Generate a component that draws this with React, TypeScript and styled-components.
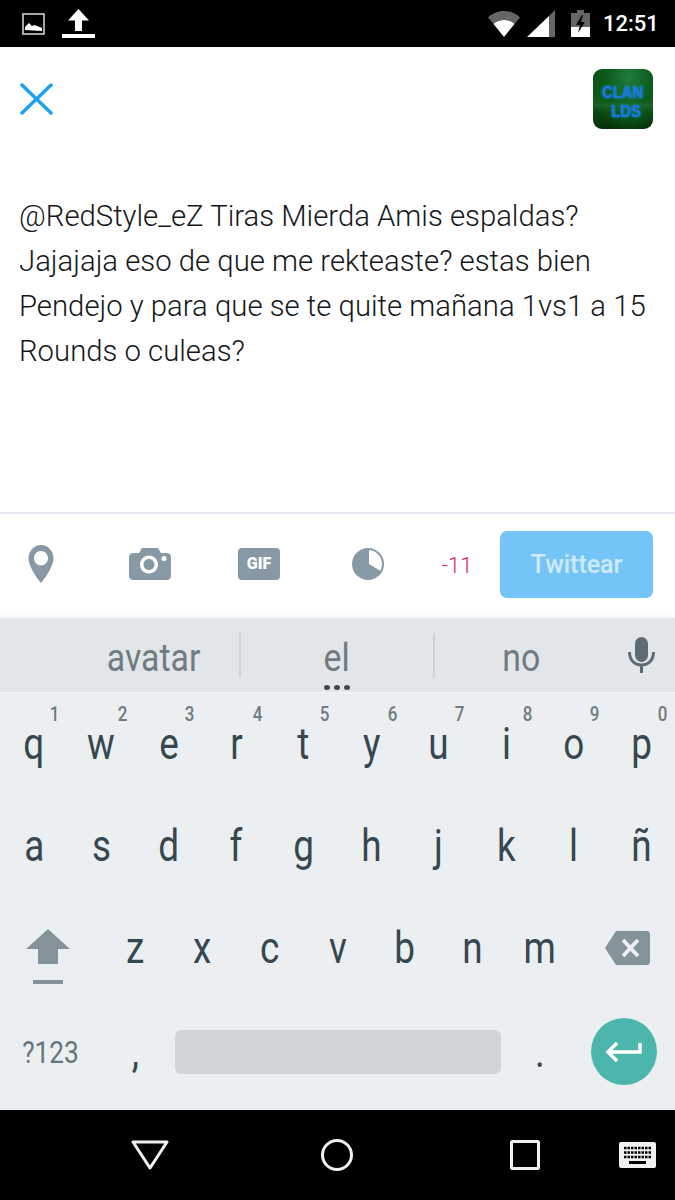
import React, { FC } from 'react'
import styled, { createGlobalStyle } from 'styled-components'

const GlobalStyle = createGlobalStyle`
  html, body {
    margin: 0;
    padding: 0;
    background: #fff;
  }
  body {
    font-family: Roboto, 'Liberation Sans', sans-serif;
  }
`

const Screen = styled.div`
  width: 675px;
  height: 1200px;
  display: flex;
  flex-direction: column;
  overflow: hidden;
  background: #fff;
`

const StatusBar = styled.div`
  height: 47px;
  flex: none;
  background: #000;
  display: flex;
  align-items: center;
  padding: 0 17px 0 22px;
  box-sizing: border-box;
`

const StatusGroup = styled.div<{ $push?: boolean }>`
  display: flex;
  align-items: center;
  margin-left: ${(p) => (p.$push ? 'auto' : '0')};
`

const Clock = styled.span`
  color: #fff;
  font-size: 22px;
  font-weight: 500;
  width: 55px;
  margin-left: 13px;
  white-space: nowrap;
`

const Composer = styled.div`
  flex: none;
  height: 467px;
  box-sizing: border-box;
  padding: 22px 22px 0 20px;
  border-bottom: 2px solid #e4e7ee;
`

const ComposerTop = styled.div`
  display: flex;
  justify-content: space-between;
  align-items: flex-start;
`

const CloseButton = styled.div`
  margin-top: 14px;
  height: 32px;
`

const Avatar = styled.div`
  width: 60px;
  height: 60px;
  box-sizing: border-box;
  padding-top: 5px;
  border-radius: 9px;
  background:
    linear-gradient(180deg, transparent 52%, rgba(60, 140, 70, 0.25) 60%, transparent 72%),
    radial-gradient(ellipse at 60% 15%, #1f7d3a 0%, #0d5a1d 45%, transparent 75%),
    linear-gradient(180deg, #0a4a10 0%, #0f5a1c 50%, #06300a 100%);
  display: flex;
  flex-direction: column;
  align-items: center;
  justify-content: center;
  color: #1a78e0;
  font-family: 'Liberation Sans', sans-serif;
  font-weight: 700;
  font-size: 17px;
  line-height: 19px;
  text-shadow: 0 0 3px #1590ee;
`

const AvatarLine = styled.span<{ $nudge?: boolean }>`
  display: inline-block;
  transform: scaleX(0.87);
  margin-left: ${(p) => (p.$nudge ? '6px' : '0')};
`

const TweetText = styled.div`
  margin: 65px 0 0 -1px;
  font-size: 29.3px;
  font-weight: 300;
  line-height: 45px;
  color: #14171a;
  white-space: pre-line;
`

const Toolbar = styled.div`
  flex: none;
  height: 99px;
  display: flex;
  align-items: center;
  padding: 0 22px 0 19px;
  gap: 65px;
  box-sizing: border-box;
`

const ToolSlot = styled.div`
  width: 44px;
  display: flex;
  justify-content: center;
`

const Counter = styled.span`
  width: 44px;
  margin: 3px 0 0 -20px;
  text-align: center;
  color: #e0245e;
  font-size: 22px;
  font-weight: 300;
`

const TweetButton = styled.div`
  width: 153px;
  height: 67px;
  margin: 2px 0 0 -44px;
  border-radius: 7px;
  background: #75c4f8;
  color: #cfeafd;
  font-size: 25px;
  font-weight: 500;
  display: flex;
  align-items: center;
  justify-content: center;
`

const Suggestions = styled.div`
  flex: none;
  height: 74px;
  margin-top: 5px;
  background: #e3e6e9;
  box-shadow: 0 -2px 3px rgba(0, 0, 0, 0.05);
  display: grid;
  grid-template-columns: 68px 173px 194px 173px 67px;
  align-items: center;
`

const Suggestion = styled.div<{ $col: number; $rule?: boolean }>`
  position: relative;
  grid-column: ${(p) => p.$col};
  height: 45px;
  display: flex;
  align-items: center;
  justify-content: center;
  color: #6f7b80;
  font-size: 38px;
  border-right: ${(p) => (p.$rule ? '2px solid #cfd3d6' : 'none')};
`

const SuggestionWord = styled.span`
  display: inline-block;
  margin-top: 6px;
  transform: scaleX(0.89);
`

const KeyLetter = styled.span`
  display: inline-block;
  transform: scaleX(0.82);
`

const MoreDots = styled.div`
  position: absolute;
  left: 50%;
  bottom: -12px;
  transform: translateX(-50%);
  display: flex;
  gap: 4px;

  i {
    width: 6px;
    height: 5px;
    border-radius: 50%;
    background: #3f4a50;
  }
`

const MicSlot = styled.div`
  display: flex;
  justify-content: center;
`

const Keyboard = styled.div`
  flex: none;
  height: 418px;
  box-sizing: border-box;
  padding-bottom: 7px;
  background: #eceff1;
  border-top: 2px solid #f0f2f4;
  display: grid;
  grid-auto-rows: 1fr;
`

const KeyRow = styled.div`
  display: grid;
  grid-template-columns: repeat(20, 1fr);
`

const Key = styled.div<{ $span?: number; $flush?: boolean }>`
  position: relative;
  grid-column: span ${(p) => p.$span ?? 2};
  display: flex;
  align-items: center;
  justify-content: center;
  padding-bottom: ${(p) => (p.$flush ? '0' : '4px')};
  box-sizing: border-box;
  color: #37474f;
  font-size: 45px;
  line-height: 1;
`

const Hint = styled.span`
  position: absolute;
  top: 10px;
  right: 7px;
  font-size: 20px;
  font-weight: 500;
  color: #6f7b80;
  transform: scaleX(0.85);
`

const ModeLabel = styled.span`
  display: inline-block;
  font-size: 32px;
  color: #66757c;
  transform: scaleX(0.82);
`

const SpaceBar = styled.div`
  width: 326px;
  height: 44px;
  border-radius: 6px;
  background: #d0d5d8;
`

const EnterCircle = styled.div`
  width: 66px;
  height: 67px;
  border-radius: 50%;
  background: #4db6ac;
  display: flex;
  align-items: center;
  justify-content: center;
`

const ShiftStack = styled.div`
  display: flex;
  flex-direction: column;
  align-items: center;
  gap: 16px;
  padding-top: 17px;
  margin-left: -6px;
`

const ShiftRule = styled.div`
  width: 30px;
  height: 4px;
  background: #84939a;
`

const NavBar = styled.div`
  flex: none;
  height: 90px;
  background: #000;
  display: flex;
  align-items: center;
  padding-left: 56px;
`

const NavSlot = styled.div`
  width: 187.5px;
  display: flex;
  justify-content: center;
`

const Grey = '#8899a6'

const GifBadge = styled.div`
  width: 42px;
  height: 32px;
  border-radius: 4px;
  background: ${Grey};
  color: #fff;
  font-size: 16px;
  font-weight: 900;
  display: flex;
  align-items: center;
  justify-content: center;
`

const PinIcon: FC = () => (
  <svg width="26" height="38" viewBox="0 0 26 38">
    <path fillRule="evenodd" fill={Grey} d="M13 0C6 0 .5 6 .5 13.500c0 7 7 18 12.500 24.500 5.500-6.500 12.500-17.500 12.500-24.500C25.500 6 20 0 13 0zM13 6c3.900 0 7 3.200 7 7.200s-3.100 7.200-7 7.200-7-3.200-7-7.200S9.100 6 13 6z" />
  </svg>
)

const CameraIcon: FC = () => (
  <svg width="42" height="32" viewBox="0 0 42 32">
    <path fillRule="evenodd" fill={Grey} d="M13 0h16l3 5h6c2.200 0 4 1.800 4 4v19c0 2.200-1.800 4-4 4H4c-2.200 0-4-1.800-4-4V9c0-2.200 1.800-4 4-4h6zM20 7.500c-5 0-9 4-9 9s4 9 9 9 9-4 9-9-4-9-9-9zM20 11c3.100 0 5.500 2.400 5.500 5.500S23.100 22 20 22s-5.500-2.400-5.500-5.500S16.900 11 20 11zM35 8a2.500 2.500 0 1 0 0 5 2.500 2.500 0 0 0 0-5z" />
  </svg>
)

const ProgressIcon: FC = () => (
  <svg width="32" height="32" viewBox="0 0 32 32">
    <circle cx="16" cy="16" r="16" fill={Grey} />
    <path fill="#fff" d="M17 2c7 .5 13 6.500 13 14 0 2.500-.6 4.800-1.700 6.800L17 16z" />
  </svg>
)

const topRow: [string, string][] = [
  ['q', '1'], ['w', '2'], ['e', '3'], ['r', '4'], ['t', '5'],
  ['y', '6'], ['u', '7'], ['i', '8'], ['o', '9'], ['p', '0'],
]

const StatusIcons: FC = () => (
  <>
    <StatusGroup>
      <svg width="23" height="22" viewBox="0 0 23 22">
        <rect x="1" y="1" width="21" height="20" fill="none" stroke="#ddd" strokeWidth="1.500" />
        <path fill="#fff" d="M3 17v-3l4-4 3 3 2-1 3 1 5 2v3z" />
      </svg>
      <svg width="33" height="29" viewBox="0 0 33 29" style={{ marginLeft: 17 }}>
        <path fill="#fff" d="M16.500 0L27 11.500h-7V22h-7V11.500H6zM0 25h33v4H0z" />
      </svg>
    </StatusGroup>
    <StatusGroup $push>
      <svg width="32" height="26" viewBox="0 0 32 26">
        <path fill="#666" d="M0 6.500C4 2.500 10 0 16 0s12 2.500 16 6.500L26.500 13C23.500 10.500 20 9 16 9s-7.500 1.500-10.500 4z" />
        <path fill="#fff" d="M5.500 13C8.500 10.500 12 9 16 9s7.500 1.500 10.500 4L16 26z" />
      </svg>
      <svg width="28" height="27" viewBox="0 0 28 27" style={{ marginLeft: 7 }}>
        <path fill="#666" d="M28 0v27h-6V6z" />
        <path fill="#fff" d="M22 6v21H0z" />
      </svg>
      <svg width="19" height="27" viewBox="0 0 19 27" style={{ marginLeft: 16 }}>
        <path fill="#666" d="M6 0h7v3h6v14H0V3h6z" />
        <path fill="#fff" d="M0 17h19v10H0z" />
        <path fill="#000" d="M11 5L5 15h4l-2 8 7-11h-4l2-7z" />
      </svg>
      <Clock>12:51</Clock>
    </StatusGroup>
  </>
)

const App: FC = () => {
  return (
    <Screen>
      <GlobalStyle />
      <StatusBar>
        <StatusIcons />
      </StatusBar>
      <Composer>
        <ComposerTop>
          <CloseButton>
            <svg width="33" height="32" viewBox="0 0 33 32">
              <path d="M2 2l29 28M31 2L2 30" stroke="#1da1f2" strokeWidth="3.500" strokeLinecap="round" fill="none" />
            </svg>
          </CloseButton>
          <Avatar>
            <AvatarLine>CLAN</AvatarLine>
            <AvatarLine $nudge>LDS</AvatarLine>
          </Avatar>
        </ComposerTop>
        <TweetText>
          {'@RedStyle_eZ Tiras Mierda Amis espaldas?\nJajajaja eso de que me rekteaste? estas bien\nPendejo y para que se te quite mañana 1vs1 a 15\nRounds o culeas?'}
        </TweetText>
      </Composer>
      <Toolbar>
        <ToolSlot>
          <PinIcon />
        </ToolSlot>
        <ToolSlot>
          <CameraIcon />
        </ToolSlot>
        <ToolSlot>
          <GifBadge>GIF</GifBadge>
        </ToolSlot>
        <ToolSlot>
          <ProgressIcon />
        </ToolSlot>
        <Counter>-11</Counter>
        <TweetButton>Twittear</TweetButton>
      </Toolbar>
      <Suggestions>
        <Suggestion $col={2} $rule>
          <SuggestionWord>avatar</SuggestionWord>
        </Suggestion>
        <Suggestion $col={3} $rule>
          <SuggestionWord>el</SuggestionWord>
          <MoreDots>
            <i />
            <i />
            <i />
          </MoreDots>
        </Suggestion>
        <Suggestion $col={4}>
          <SuggestionWord>no</SuggestionWord>
        </Suggestion>
        <MicSlot>
          <svg width="27" height="36" viewBox="0 0 27 36">
            <rect x="7" y="0" width="13" height="25" rx="6.500" fill="#5f6b72" />
            <path d="M1.500 15c0 8 5 13 12 13s12-5 12-13M13.500 28v8" stroke="#5f6b72" strokeWidth="3" fill="none" />
          </svg>
        </MicSlot>
      </Suggestions>
      <Keyboard>
        <KeyRow>
          {topRow.map(([letter, digit]) => (
            <Key key={letter}>
              <Hint>{digit}</Hint>
              <KeyLetter>{letter}</KeyLetter>
            </Key>
          ))}
        </KeyRow>
        <KeyRow>
          {['a', 's', 'd', 'f', 'g', 'h', 'j', 'k', 'l', 'ñ'].map((letter) => (
            <Key key={letter}>
              <KeyLetter>{letter}</KeyLetter>
            </Key>
          ))}
        </KeyRow>
        <KeyRow>
          <Key $span={3}>
            <ShiftStack>
              <svg width="44" height="35" viewBox="0 0 44 35">
                <path fill="#84939a" d="M22 0l22 20H32v15H12V20H0z" />
              </svg>
              <ShiftRule />
            </ShiftStack>
          </Key>
          {['z', 'x', 'c', 'v', 'b', 'n', 'm'].map((letter) => (
            <Key key={letter}>
              <KeyLetter>{letter}</KeyLetter>
            </Key>
          ))}
          <Key $span={3}>
            <svg width="45" height="34" viewBox="0 0 45 34" style={{ marginLeft: 6 }}>
              <path fill="#84939a" d="M11 0h31c1.700 0 3 1.300 3 3v28c0 1.700-1.300 3-3 3H11L0 17z" />
              <path stroke="#eceff1" strokeWidth="4" d="M18 9l15 16M33 9L18 25" />
            </svg>
          </Key>
        </KeyRow>
        <KeyRow>
          <Key $span={3} $flush>
            <ModeLabel>?123</ModeLabel>
          </Key>
          <Key $flush>
            <KeyLetter>,</KeyLetter>
          </Key>
          <Key $span={10} $flush>
            <SpaceBar />
          </Key>
          <Key $flush>
            <KeyLetter>.</KeyLetter>
          </Key>
          <Key $span={3} $flush>
            <EnterCircle>
              <svg width="36" height="22" viewBox="0 0 36 22">
                <path d="M34 2v9H3M11 2L2 11l9 9" stroke="#fff" strokeWidth="3.500" fill="none" />
              </svg>
            </EnterCircle>
          </Key>
        </KeyRow>
      </Keyboard>
      <NavBar>
        <NavSlot>
          <svg width="38" height="30" viewBox="0 0 38 30">
            <path d="M2 2h34L19 28z" stroke="#f1f1f1" strokeWidth="3" strokeLinejoin="round" fill="none" />
          </svg>
        </NavSlot>
        <NavSlot>
          <svg width="32" height="32" viewBox="0 0 32 32">
            <circle cx="16" cy="16" r="14.500" stroke="#f1f1f1" strokeWidth="3" fill="none" />
          </svg>
        </NavSlot>
        <NavSlot>
          <svg width="30" height="30" viewBox="0 0 30 30">
            <rect x="1.500" y="1.500" width="27" height="27" rx="1" stroke="#f1f1f1" strokeWidth="3" fill="none" />
          </svg>
        </NavSlot>
        <svg width="37" height="26" viewBox="0 0 37 26">
          <rect width="37" height="26" rx="2" fill="#f1f1f1" />
          <path stroke="#000" strokeWidth="2.500" strokeDasharray="2.500 1" d="M5 6h27M5 10.500h27M5 15h27" />
          <rect x="10" y="19" width="17" height="3" fill="#000" />
        </svg>
      </NavBar>
    </Screen>
  )
}

export default App
